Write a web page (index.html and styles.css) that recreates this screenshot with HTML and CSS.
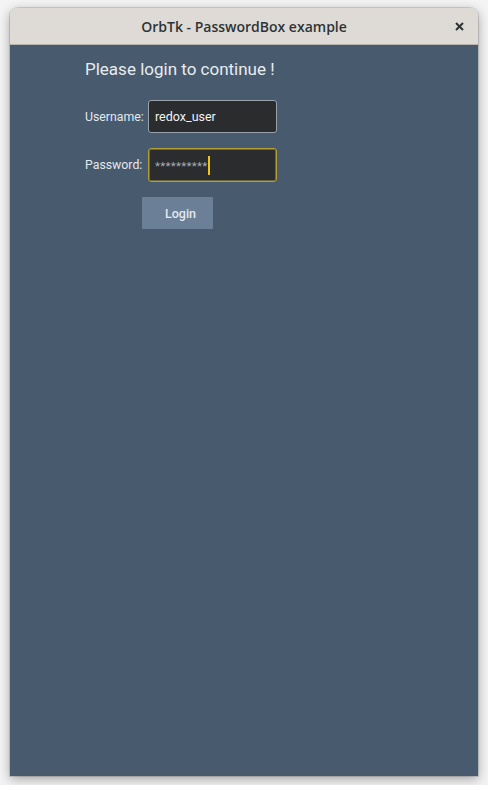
FILE: index.html
```html
<!DOCTYPE html>
<html>
<head>
<meta charset="utf-8">
<link rel="stylesheet" href="styles.css">
</head>
<body>
<div class="window">
  <div class="titlebar">
    <span class="title">OrbTk - PasswordBox example</span>
    <svg class="close" width="9" height="9" viewBox="0 0 9 9"><path d="M1 1 L8 8 M8 1 L1 8" stroke="#2e3436" stroke-width="2" stroke-linecap="butt"/></svg>
  </div>
  <div class="content">
    <div class="heading">Please login to continue !</div>
    <div class="form">
      <label class="label">Username:</label>
      <div class="textbox">redox_user</div>
      <label class="label">Password:</label>
      <div class="textbox focused"><span class="stars">**********</span><span class="caret"></span></div>
    </div>
    <button class="login">Login</button>
  </div>
</div>
</body>
</html>
```
FILE: styles.css
```css
html, body { margin: 0; padding: 0; }
body {
  background: #f4f4f4;
  width: 488px;
  height: 785px;
  overflow: hidden;
}
.window {
  margin: 8px 0 0 10px;
  width: 468px;
  height: 768px;
  border-radius: 8px 8px 0 0;
  box-shadow: 0 3px 12px rgba(0,0,0,0.35), 0 0 0 1px rgba(0,0,0,0.12);
  display: flex;
  flex-direction: column;
  overflow: hidden;
}
.titlebar {
  height: 36px;
  background: #dedbd7;
  border-bottom: 1px solid #b7b3ae;
  display: flex;
  align-items: center;
  justify-content: center;
  position: relative;
  flex: none;
}
.title {
  font-family: "Open Sans", "Noto Sans", sans-serif;
  font-weight: 600;
  font-size: 14px;
  color: #2e3436;
  margin-top: 1px;
}
.close {
  position: absolute;
  right: 14px;
  top: 14px;
}
.content {
  flex: 1;
  background: #475a6e;
  padding: 13px 0 0 75px;
  font-family: Roboto, "Noto Sans", sans-serif;
}
.heading {
  font-size: 17px;
  color: #e8ecef;
  line-height: 23px;
}
.form {
  margin-top: 19px;
  display: grid;
  grid-template-columns: 63px 129px;
  row-gap: 15px;
  align-items: center;
}
.label {
  font-size: 12.3px;
  color: #e4e8ec;
}
.textbox {
  box-sizing: border-box;
  height: 33px;
  background: #2b2c2e;
  border: 1px solid #9aa2ab;
  border-radius: 3px;
  color: #f2f2f2;
  font-size: 12.5px;
  padding: 0 6px;
  display: flex;
  align-items: center;
}
.textbox.focused {
  height: 34px;
  border-color: #b39d37;
  box-shadow: inset 0 0 0 1px #6f6733;
}
.stars {
  color: #a6aeb6;
  font-size: 11.5px;
  letter-spacing: 0.3px;
  margin-top: 1px;
}
.caret {
  width: 2px;
  height: 19px;
  background: #f2c41a;
  margin-left: 0;
}
.login {
  display: block;
  margin: 15px 0 0 57px;
  width: 71px;
  height: 32px;
  border: none;
  border-radius: 1px;
  background: #6b8096;
  color: #e4e9ee;
  font-family: Roboto, "Noto Sans", sans-serif;
  font-size: 12.5px;
  font-weight: 500;
  padding: 0 0 0 6px;
}
```
